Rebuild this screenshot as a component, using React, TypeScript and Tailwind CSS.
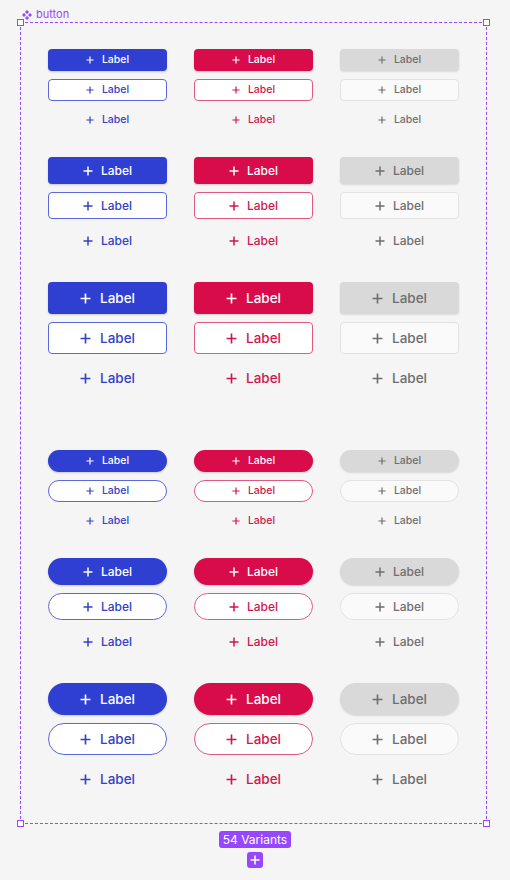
import React from "react";

type Tone = "blue" | "red" | "gray";
type Kind = "filled" | "outline" | "text";
type Size = "sm" | "md" | "lg";

const sizeCls: Record<Size, string> = {
  sm: "h-[22px] text-[10.5px] gap-[8px]",
  md: "h-[27px] text-[12px] gap-[8px]",
  lg: "h-[32px] text-[13.5px] gap-[9px]",
};

const iconSize: Record<Size, number> = {sm: 8, md: 10, lg: 11};

const toneCls: Record<Tone, Record<Kind, string>> = {
  blue: {
    filled: "bg-[#2f3fd2] text-white shadow-[0_1px_2px_rgba(0,0,0,0.18)]",
    outline: "bg-white border border-[#5b67dc] text-[#3341c6]",
    text: "text-[#3341c6]",
  },
  red: {
    filled: "bg-[#d80b4b] text-white shadow-[0_1px_2px_rgba(0,0,0,0.18)]",
    outline: "bg-white border border-[#e05a80] text-[#d0164f]",
    text: "text-[#d0164f]",
  },
  gray: {
    filled: "bg-[#d9d9d9] text-[#6e6e6e] shadow-[0_1px_2px_rgba(0,0,0,0.12)]",
    outline: "bg-[#fafafa] border border-[#e2e2e2] text-[#6e6e6e]",
    text: "text-[#6e6e6e]",
  },
};

function Plus({size}: {size: number}) {
  return (
      <svg width={size} height={size} viewBox="0 0 10 10" fill="none">
        <path d="M5 0.5V9.5M0.5 5H9.5" stroke="currentColor" strokeWidth="1.5"/>
      </svg>
  );
}

function Btn({tone, kind, size, pill}: { tone: Tone; kind: Kind; size: Size; pill: boolean }) {
  return (
      <div
          className={"flex items-center justify-center font-medium " + sizeCls[size] + " "
              + toneCls[tone][kind] + " " + (pill ? "rounded-full" : "rounded-[4px]")}>
        <Plus size={iconSize[size]}/>
        <span>Label</span>
      </div>
  );
}

const tones: Tone[] = ["blue", "red", "gray"];
const kinds: Kind[] = ["filled", "outline", "text"];

function Group({size, pill, className}: { size: Size; pill: boolean; className: string }) {
  return (
      <div className={"grid grid-cols-3 gap-x-[27px] gap-y-[8px] " + className}>
        {kinds.map(k => tones.map(t => (
            <Btn key={k + t} tone={t} kind={k} size={size} pill={pill}/>
        )))}
      </div>
  );
}

function Handle({className}: { className: string }) {
  return <div className={"absolute w-[7px] h-[7px] bg-white border border-[#9747ff] " + className}/>;
}

export default function App() {
  return (
      <div className="w-[510px] h-[880px] bg-[#f5f5f5] relative"
           style={{fontFamily: "Inter, 'Noto Sans', sans-serif"}}>
        <div className="flex items-center gap-[4px] pl-[22px] pt-[7px] h-[22px] text-[11px] text-[#9747ff] leading-none">
          <svg width="10" height="10" viewBox="0 0 10 10" fill="#9747ff">
            <path d="M5 0L7 2L5 4L3 2Z M2 3L4 5L2 7L0 5Z M8 3L10 5L8 7L6 5Z M5 6L7 8L5 10L3 8Z"/>
          </svg>
          <span>button</span>
        </div>
        <div className="relative ml-[20px] w-[467px] h-[802px] border border-dashed border-[#9747ff] px-[27px] pt-[26px]">
          <Handle className="-left-[4px] -top-[4px]"/>
          <Handle className="-right-[4px] -top-[4px]"/>
          <Handle className="-left-[4px] -bottom-[4px]"/>
          <Handle className="-right-[4px] -bottom-[4px]"/>
          <Group size="sm" pill={false} className=""/>
          <Group size="md" pill={false} className="mt-[26px]"/>
          <Group size="lg" pill={false} className="mt-[28px]"/>
          <Group size="sm" pill={true} className="mt-[56px]"/>
          <Group size="md" pill={true} className="mt-[26px]"/>
          <Group size="lg" pill={true} className="mt-[28px]"/>
        </div>
        <div className="flex flex-col items-center mt-[7px] gap-[4px]">
          <div className="bg-[#9747ff] text-white text-[12px] leading-none px-[4px] py-[2px] rounded-[3px] h-[17px] flex items-center">
            54 Variants
          </div>
          <div className="w-[16px] h-[16px] bg-[#9747ff] rounded-[3px] flex items-center justify-center text-white">
            <Plus size={10}/>
          </div>
        </div>
      </div>
  );
}
